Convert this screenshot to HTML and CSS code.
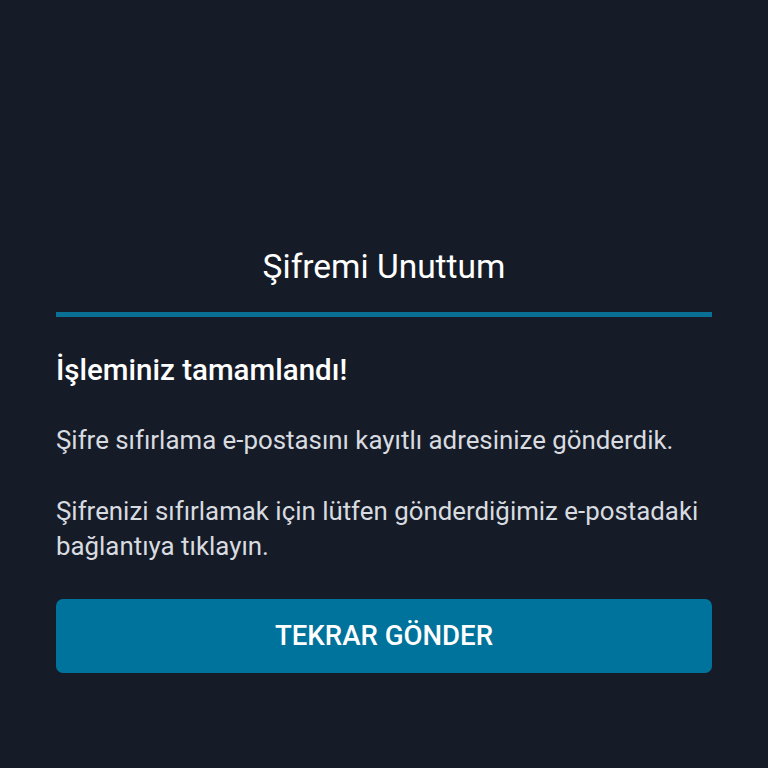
FILE: index.html
```html
<!DOCTYPE html>
<html lang="tr">
<head>
<meta charset="utf-8">
<title>Şifremi Unuttum</title>
<link rel="stylesheet" href="styles.css">
</head>
<body>
<main class="page">
  <h1 class="title">Şifremi Unuttum</h1>
  <div class="divider"></div>
  <h2 class="heading">İşleminiz tamamlandı!</h2>
  <p class="text">Şifre sıfırlama e-postasını kayıtlı adresinize gönderdik.</p>
  <p class="text">Şifrenizi sıfırlamak için lütfen gönderdiğimiz e-postadaki bağlantıya tıklayın.</p>
  <button class="btn" type="button">TEKRAR GÖNDER</button>
</main>
</body>
</html>
```
FILE: styles.css
```css
html, body {
  margin: 0;
  padding: 0;
  background: #161c27;
  height: 100%;
}
body {
  font-family: Roboto, "Liberation Sans", sans-serif;
  color: #ffffff;
}
.page {
  display: flex;
  flex-direction: column;
  padding: 248px 56px 0;
}
.title {
  margin: 0;
  font-size: 33.5px;
  font-weight: 400;
  line-height: 38px;
  text-align: center;
  color: #ffffff;
}
.divider {
  margin-top: 26px;
  height: 5px;
  background: #0a7096;
}
.heading {
  margin: 35px 0 0;
  font-size: 29.5px;
  font-weight: 500;
  line-height: 36px;
  color: #ffffff;
}
.text {
  margin: 35px 0 0;
  font-size: 25.85px;
  line-height: 35.5px;
  color: #d8dbe0;
}
.btn {
  margin-top: 34px;
  height: 74px;
  border: 0;
  border-radius: 7px;
  background: #00739c;
  color: #ffffff;
  font-family: Roboto, "Liberation Sans", sans-serif;
  font-size: 27.6px;
  font-weight: 500;
}
```
